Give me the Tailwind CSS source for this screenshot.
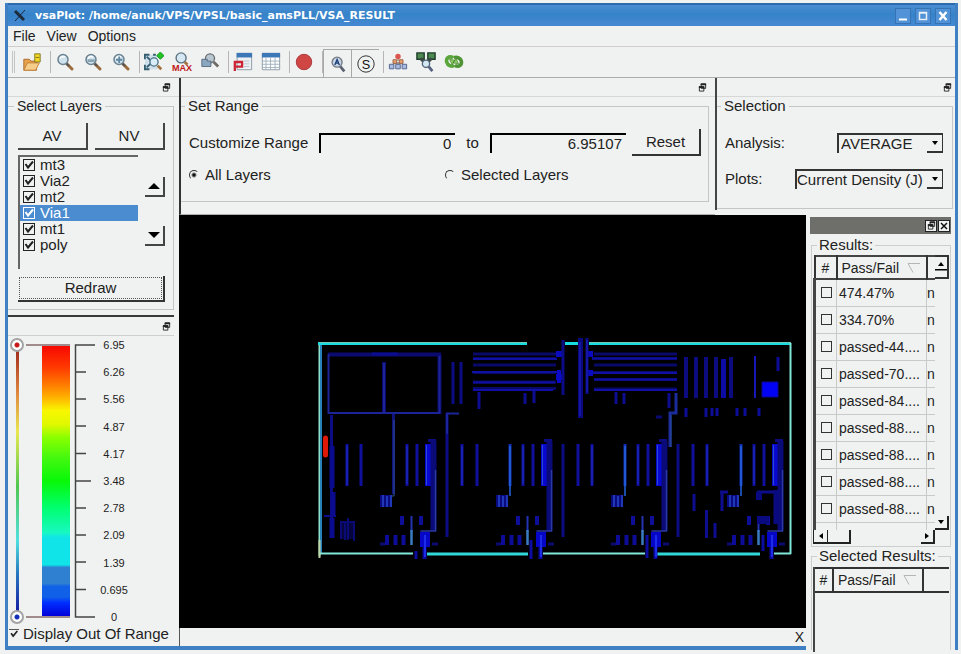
<!DOCTYPE html>
<html lang="en">
<head>
<meta charset="utf-8">
<meta name="viewport" content="width=device-width, initial-scale=1">
<title>vsaPlot</title>
<script src="https://cdn.jsdelivr.net/npm/@tailwindcss/browser@4"></script>
</head>
<body class="flex h-screen min-h-[654px] flex-col bg-[#f0f2f1] pt-[3px] pr-[3px] pb-1 pl-[5px] font-['Liberation_Sans',Arial,sans-serif] text-[15px] leading-[18px] text-[#222]">

<!-- shared icon shapes -->
<svg class="hidden" aria-hidden="true">
  <symbol id="float" viewBox="0 0 10 10"><path d="M3.5 1h5v5h-5zM1.5 4h5v5h-5z" fill="none" stroke="#222"/><path d="M3 1.5h6M1 4.5h6" stroke="#222" stroke-width="2"/></symbol>
  <symbol id="lens" viewBox="0 0 20 20"><path d="M12 12l5 5" stroke="#9a6b3c" stroke-width="3" stroke-linecap="round"/><path d="M11 11l3 3" stroke="#555" stroke-width="2"/><circle cx="8" cy="7.500" r="5" fill="#cfe3ee" stroke="#6c8290" stroke-width="1.500"/><path d="M5 6.500a3.500 3 0 0 1 5-1.500" stroke="#fff" stroke-width="1.500" fill="none"/></symbol>
  <symbol id="tick" viewBox="0 0 12 12"><path d="M2.500 5l2.500 3.500 5-6" fill="none" stroke="currentColor" stroke-width="2"/></symbol>
  <symbol id="sort" viewBox="0 0 14 12"><path d="M13 1.500H1l5 9" fill="none" stroke="#b5b5b5"/></symbol>
</svg>

<div class="flex min-h-0 flex-1 flex-col border-x-[3px] border-[#3f7fc4]">
  <header class="flex h-[23px] shrink-0 items-center border-t-2 border-[#2c6aae] bg-[linear-gradient(#4a8cd2,#3683c9_45%,#4589d2)] pr-1 pl-1">
    <svg class="h-4 w-4" viewBox="0 0 16 16"><path d="M3 3l9 9" stroke="#1c2a3a" stroke-width="3"/><path d="M13 2L3 13" stroke="#1c2a3a" stroke-width="1"/></svg>
    <h1 class="ml-[7px] flex-1 font-['DejaVu_Sans',sans-serif] text-[11px] font-bold whitespace-nowrap text-white">vsaPlot: /home/anuk/VPS/VPSL/basic_amsPLL/VSA_RESULT</h1>
    <div class="flex gap-1">
      <button aria-label="Minimize" class="h-4 w-4 border border-[#3673b5] bg-[#5292d6]"><svg viewBox="0 0 14 14"><path d="M3 10.500h8" stroke="#fff" stroke-width="2"/></svg></button>
      <button aria-label="Maximize" class="h-4 w-4 border border-[#3673b5] bg-[#5292d6]"><svg viewBox="0 0 14 14"><path d="M3.500 3.500h7v7h-7zM3 4h8" fill="none" stroke="#e8f0f8" stroke-width="1.500"/></svg></button>
      <button aria-label="Close" class="h-4 w-4 border border-[#3673b5] bg-[#5292d6]"><svg viewBox="0 0 14 14"><path d="M3.500 3l7 8M10.500 3l-7 8" stroke="#fff" stroke-width="2.500"/></svg></button>
    </div>
  </header>

  <nav class="flex h-[21px] shrink-0 items-center gap-[11px] border-b border-[#d2cccc] pl-[5px] text-[14px]">
    <button>File</button><button>View</button><button>Options</button>
  </nav>

  <div role="toolbar" class="flex h-[31px] shrink-0 items-stretch border-b border-[#a9adad] [&>button]:grid [&>button]:w-7 [&>button]:place-items-center [&>i]:ml-1 [&>i]:my-1 [&>i]:w-px [&>i]:bg-[#b9b5b5] [&_svg]:size-[20px]">
    <span class="my-1 mr-[3px] ml-1 w-[3px] border-x border-[#c4c4c4]"></span>
    <button aria-label="Open"><svg viewBox="0 0 22 22"><path d="M2 8h6l2 2h6v10H2z" fill="#e8a24c" stroke="#a8672a"/><path d="M2 20l4-8h13l-4 8z" fill="#f6cd8a" stroke="#c08038"/><path d="M14 2h6v9h-6z" fill="#f2d624" stroke="#7c7420"/><path d="M15 6h4" stroke="#7c7420"/></svg></button>
    <i></i>
    <button aria-label="Zoom"><svg viewBox="0 0 22 22"><use href="#lens"/></svg></button>
    <button aria-label="Zoom out"><svg viewBox="0 0 22 22"><use href="#lens"/><path d="M5 9.500h8" stroke="#8aa4b4" stroke-width="3"/></svg></button>
    <button aria-label="Zoom fit"><svg viewBox="0 0 22 22"><use href="#lens"/><path d="M5.500 8.500h7M9 5v7" stroke="#5f87a0" stroke-width="2"/></svg></button>
    <i></i>
    <button aria-label="Zoom area"><svg viewBox="0 0 22 22"><path d="M1 3h14v16H1z" fill="#cfe0ea"/><path d="M1 8V3h5M1 14v5h5M10 3h3M3 5l4 4M3 17l4-4" stroke="#355d70" stroke-width="2" fill="none"/><circle cx="11" cy="11" r="4.500" fill="#d8edf8" stroke="#4d7386" stroke-width="1.500"/><path d="M15 15l4 4" stroke="#a4713c" stroke-width="3"/><path d="M18 0l4 4-4 4-4-4z" fill="#21c422" stroke="#118a18"/></svg></button>
    <button aria-label="Zoom to maximum"><svg viewBox="0 0 22 22"><circle cx="10" cy="6.500" r="5.500" fill="#d5e8f4" stroke="#5c7280" stroke-width="1.500"/><path d="M14 11l3 3" stroke="#a4713c" stroke-width="3"/><text x="0" y="21" font-size="10" font-weight="700" font-family="Liberation Sans" fill="#c01818">MAX</text></svg></button>
    <button aria-label="Zoom previous"><svg viewBox="0 0 22 22"><circle cx="11" cy="7" r="5" fill="#b9c8d0" stroke="#6a6f74" stroke-width="1.500"/><path d="M15 11l5 5" stroke="#6d6a66" stroke-width="3"/><path d="M2 8h6v2h4v6H2z" fill="#8aa6c0" stroke="#55697c"/></svg></button>
    <i></i>
    <button aria-label="Plot report"><svg viewBox="0 0 22 22"><path d="M4.500 1.500h16v18h-16z" fill="#edf1f4" stroke="#8a97a2"/><path d="M4 1h17v5H4z" fill="#3c78b8"/><path d="M12 10h6M12 13h6M12 16h6" stroke="#b6c2cc"/><path d="M2 21V11h8v5H3" stroke="#cc2434" stroke-width="2.500" fill="none"/></svg></button>
    <button aria-label="Table report"><svg viewBox="0 0 22 22"><path d="M1.500 1.500h19v18h-19z" fill="#fff" stroke="#8a97a2"/><path d="M1 1h20v5H1z" fill="#3c78b8"/><path d="M1 10h20M1 13.500h20M1 17h20M5.500 6v13M10.500 6v13M15.500 6v13" stroke="#9fb0bd"/></svg></button>
    <i></i>
    <button aria-label="Stop"><svg viewBox="0 0 22 22"><circle cx="11" cy="11" r="8.500" fill="#cf4644" stroke="#a83434"/></svg></button>
    <i></i>
    <button aria-label="Auto zoom" class="mt-[2px] border-t border-l border-[#a8a8a8]"><svg viewBox="0 0 22 22"><path d="M13 13l5 6" stroke="#5d6270" stroke-width="3"/><circle cx="10" cy="9" r="5.500" fill="#c5d4e6" stroke="#777c84" stroke-width="1.500"/><path d="M7.500 12L10 6l2.500 6M8.500 10h3" stroke="#1e4078" stroke-width="1.500" fill="none"/></svg></button>
    <button aria-label="Snap" class="mt-[2px] border-t border-l border-[#a8a8a8]"><svg viewBox="0 0 22 22"><circle cx="11" cy="11" r="9" fill="none" stroke="#222"/><text x="11" y="16" text-anchor="middle" font-size="14" font-family="Liberation Sans" fill="#111">S</text></svg></button>
    <i></i>
    <button aria-label="Hierarchy"><svg viewBox="0 0 22 22"><path d="M11 6v4M4 17l3-5h8l3 5M11 12v5" stroke="#7a5a50" fill="none"/><circle cx="11" cy="5" r="3" fill="#dc5650"/><path d="M5.500 8.500h4v4h-4zM12.500 8.500h4v4h-4z" fill="#eaa070" stroke="#9a6040"/><path d="M1.500 13.500h5v5h-5zM8.500 13.500h5v5h-5zM15.500 13.500h5v5h-5z" fill="#a9bce0" stroke="#4d5f8c"/></svg></button>
    <button aria-label="Find nets"><svg viewBox="0 0 22 22"><path d="M1 1h8v7H1zM13 1h8v7h-8z" fill="#4d8a52" stroke="#1c3a28" stroke-width="1.500"/><path d="M5 7l6 6 6-6" stroke="#3b4a44" stroke-width="3.500" fill="none"/><circle cx="11" cy="13" r="4" fill="#d4e8f4" stroke="#567" stroke-width="1.500"/><path d="M14 16l4 5" stroke="#556080" stroke-width="3"/></svg></button>
    <button aria-label="Refresh"><svg viewBox="0 0 22 22"><path d="M10 6c-5-2-8 1-7 5s6 6 8 3" fill="none" stroke="#5aa63c" stroke-width="4"/><path d="M12 15c5 2 8-1 7-5s-6-5-8-3" fill="none" stroke="#4f9434" stroke-width="4"/><path d="M6 8l6 1-3 5zM16 13l-6-1 3-5z" fill="#8acc60" stroke="#3c7c28" stroke-width=".7"/></svg></button>
  </div>

  <main class="flex min-h-0 flex-1">
    <!-- left docks -->
    <aside class="flex w-[171px] shrink-0 flex-col border-b-4 border-[#3f7fc4]">
      <div class="flex h-[19px] items-center justify-end border-b border-[#d6d8d8] pr-2"><button aria-label="Float layers"><svg class="size-[9px]"><use href="#float"/></svg></button></div>
      <fieldset class="mr-[5px] border-t border-r border-b border-[#c4c6c6] pr-2 pb-[7px] pl-[10px]">
        <legend class="-ml-1 px-[3px] text-[14px]">Select Layers</legend>
        <div class="mt-2 flex gap-[7px]">
          <button class="h-[27px] flex-1 border-r-2 border-b-2 border-[#444]">AV</button>
          <button class="h-[27px] flex-1 border-r-2 border-b-2 border-[#444]">NV</button>
        </div>
        <div class="mt-[5px] flex gap-[7px]">
          <ul id="layers" class="h-[114px] flex-1 border-t-2 border-l-2 border-[#666] leading-4"></ul>
          <div class="flex w-5 flex-col gap-[29px] pt-[22px]">
            <button aria-label="Move up" class="grid h-5 place-items-center border-r-2 border-b-2 border-[#444]"><svg class="h-[6px] w-3" viewBox="0 0 12 6"><path d="M0 6l6-6 6 6z"/></svg></button>
            <button aria-label="Move down" class="grid h-5 place-items-center border-r-2 border-b-2 border-[#444]"><svg class="h-[6px] w-3" viewBox="0 0 12 6"><path d="M0 0l6 6 6-6z"/></svg></button>
          </div>
        </div>
        <button class="mt-[7px] block h-[26px] w-full border-r-2 border-b-2 border-[#333] p-px"><span class="block border border-dotted border-[#555] leading-5">Redraw</span></button>
      </fieldset>

      <section class="mt-[5px] mr-[5px] flex flex-1 flex-col border-t-2 border-[#3a3a3a]">
        <div class="flex h-[19px] items-center justify-end border-b border-[#cfcfcf] pr-[3px]"><button aria-label="Float scale"><svg class="size-[9px]"><use href="#float"/></svg></button></div>
        <div class="mt-[2px] flex h-[286px]">
          <div class="grid w-[18px] place-items-center [&>*]:col-start-1 [&>*]:row-start-1">
            <span class="h-[272px] w-[3px] bg-[linear-gradient(#9a2018,#e08a40_18%,#e8e850_32%,#50c850_52%,#50e0e0_72%,#2878c0_84%,#1010a0)]"></span>
            <input type="range" aria-label="Lower limit" min="0" max="6.95" step="0.01" value="0" class="pointer-events-none h-[286px] w-[14px] appearance-none bg-transparent [direction:rtl] [writing-mode:vertical-lr] [&::-webkit-slider-thumb]:pointer-events-auto [&::-webkit-slider-thumb]:size-[14px] [&::-webkit-slider-thumb]:appearance-none [&::-webkit-slider-thumb]:rounded-full [&::-webkit-slider-thumb]:border-2 [&::-webkit-slider-thumb]:border-[#a3a3a3] [&::-webkit-slider-thumb]:bg-[radial-gradient(#1030b8_0_2px,#fff_3px)]">
            <input type="range" aria-label="Upper limit" min="0" max="6.95" step="0.01" value="6.95" class="pointer-events-none h-[286px] w-[14px] appearance-none bg-transparent [direction:rtl] [writing-mode:vertical-lr] [&::-webkit-slider-thumb]:pointer-events-auto [&::-webkit-slider-thumb]:size-[14px] [&::-webkit-slider-thumb]:appearance-none [&::-webkit-slider-thumb]:rounded-full [&::-webkit-slider-thumb]:border-2 [&::-webkit-slider-thumb]:border-[#a3a3a3] [&::-webkit-slider-thumb]:bg-[radial-gradient(#c81818_0_2px,#fff_3px)]">
          </div>
          <div class="my-[6px] w-11 border-y-2 border-[#a08c8c] pl-4"><div class="h-full w-7 bg-[linear-gradient(#f80800,#ff3a00_8%,#ff7800_14%,#ffb000_19%,#f8f800_24%,#e0f800_29%,#88ff00_34%,#40f810_42%,#08f808_50%,#00ff70_60%,#18f8c0_69%,#10e4e8_71%_81%,#2f80d0_82%_88%,#1060e8_89%_93%,#0030ff_95%,#0000d8)]"></div></div>
          <svg class="mt-[6px] ml-1 h-[274px] w-[22px]" viewBox="0 0 22 274"><path d="M21 1H1.500v272H21M1 28h11M1 55h11M1 82h11M1 109.500h11M1 137h16M1 164h11M1 191h11M1 218h11M1 245.500h11" fill="none" stroke="#444" stroke-width="1.500"/></svg>
          <ol id="scale" class="my-px flex w-9 flex-col justify-between text-center text-[11px] leading-3"></ol>
        </div>
        <label class="flex items-center gap-1 pt-[1px] pl-px whitespace-nowrap"><span class="grid [&>*]:col-start-1 [&>*]:row-start-1"><input type="checkbox" checked class="peer size-[10px] appearance-none border-t border-[#555]"><svg class="pointer-events-none hidden size-[10px] peer-checked:block"><use href="#tick"/></svg></span>Display Out Of Range</label>
      </section>
    </aside>

    <div class="flex min-w-0 flex-1 flex-col">
      <div class="flex h-[137px] shrink-0">
        <section class="min-w-0 flex-1 border-b border-l-2 border-b-[#b0b0b0] border-l-[#333]">
          <div class="flex h-[19px] items-center justify-end border-b border-[#d6d8d8] pr-2"><button aria-label="Float range"><svg class="size-[9px]"><use href="#float"/></svg></button></div>
          <fieldset class="mr-[6px] h-[105px] min-w-0 border border-l-0 border-[#c4c6c6] pr-[7px] pl-[8px]">
            <legend class="-ml-1 px-[3px]">Set Range</legend>
            <div class="mt-[14px] flex h-[27px] items-center gap-[11px]">
              <label for="lo" class="shrink-0">Customize Range</label>
              <input id="lo" value="0" class="h-5 min-w-0 flex-1 border-t-2 border-l-2 border-black pr-1 text-right outline-none">
              <label for="hi">to</label>
              <input id="hi" value="6.95107" class="h-5 min-w-0 flex-1 border-t-2 border-l-2 border-black pr-1 text-right outline-none">
              <button class="-ml-[5px] h-[27px] w-[69px] shrink-0 border-r-2 border-b-2 border-[#333]">Reset</button>
            </div>
            <div class="mt-[10px] grid grid-cols-2 items-center">
              <label class="flex items-center gap-[6px]"><input type="radio" name="scope" checked class="size-[10px] appearance-none rounded-full border border-transparent border-t-[#333] border-l-[#333] checked:bg-[radial-gradient(#111_0_1px,transparent_3px)]">All Layers</label>
              <label class="flex items-center gap-[6px]"><input type="radio" name="scope" class="size-[10px] appearance-none rounded-full border border-transparent border-t-[#333] border-l-[#333] checked:bg-[radial-gradient(#111_0_1px,transparent_3px)]">Selected Layers</label>
            </div>
          </fieldset>
        </section>
        <section class="mb-[5px] w-[240px] shrink-0 border-l-2 border-[#444]">
          <div class="flex h-[19px] items-center justify-end border-b border-[#d6d8d8] pr-[3px]"><button aria-label="Float selection"><svg class="size-[9px]"><use href="#float"/></svg></button></div>
          <fieldset class="mr-[2px] h-[112px] border border-l-0 border-[#c4c6c6] pr-[9px] pl-2">
            <legend class="-ml-1 px-[3px]">Selection</legend>
            <div class="mt-[18px] flex h-5 items-center justify-between">
              <label for="analysis">Analysis:</label>
              <span class="grid w-[106px] border-t-2 border-r border-l-2 border-[#333] [&>*]:row-start-1 [&>*]:col-start-1">
                <select id="analysis" class="h-[18px] appearance-none pl-[2px]"><option>AVERAGE</option></select>
                <span class="pointer-events-none grid w-[15px] place-items-center justify-self-end border-b-2 border-[#333]"><svg class="h-1 w-[6px]" viewBox="0 0 6 4"><path d="M0 0h6L3 4z"/></svg></span>
              </span>
            </div>
            <div class="mt-4 flex h-5 items-center justify-between">
              <label for="plots">Plots:</label>
              <span class="grid w-[148px] border-t-2 border-r border-l-2 border-[#333] [&>*]:row-start-1 [&>*]:col-start-1">
                <select id="plots" class="h-[18px] appearance-none"><option>Current Density (J)</option></select>
                <span class="pointer-events-none grid w-[15px] place-items-center justify-self-end border-b-2 border-[#333]"><svg class="h-1 w-[6px]" viewBox="0 0 6 4"><path d="M0 0h6L3 4z"/></svg></span>
              </span>
            </div>
          </fieldset>
        </section>
      </div>

      <div class="flex min-h-0 flex-1">
        <div class="flex min-w-0 flex-1 flex-col border-b-4 border-[#3f7fc4]">
          <div class="min-h-0 flex-1 bg-black">
            <svg class="h-full w-full" viewBox="179 215 627 413" role="img" aria-label="Current density layout plot" fill="none">
              <defs>
                <g id="cell">
                  <path d="M407 444v42M417 444v42" stroke="#10109c" stroke-width="3"/>
                  <path d="M407 446v38" stroke="#2030c8"/>
                  <path d="M425 444h8v42h-8z" fill="#0808d0"/><path d="M426.500 445v40" stroke="#2848d8"/>
                  <path d="M428 439h8v3h-8z" fill="#0c0c80"/>
                  <path d="M433.500 441v90" stroke="#0a0a78" stroke-width="6"/><path d="M435.500 470v61h-15" stroke="#2a3aa0" stroke-width="1.500"/>
                  <path d="M380 495h12v12h-12z" fill="#0a0a80"/><path d="M383 495v12M387 496v11M391 495v12" stroke="#2848c8" stroke-width="1.500"/>
                  <path d="M402 516v9M421 516v9" stroke="#0e0e98" stroke-width="4"/>
                  <path d="M411.500 516v16" stroke="#2433b0" stroke-width="2"/><path d="M411.500 530v15" stroke="#3a7cc0" stroke-width="2.500"/>
                  <path d="M387 535v10M395.500 535v10M403.500 535v10" stroke="#0c0c98" stroke-width="4"/>
                  <path d="M380 544h5M432 544h6" stroke="#0a0a70" stroke-width="3"/>
                  <path d="M420 532h10v15h-10z" fill="#0606c8"/><path d="M424.500 546v13" stroke="#0a0aa0" stroke-width="4"/><path d="M425 535v22" stroke="#1c2ce8" stroke-width="2"/>
                </g>
              </defs>
              <path d="M319.500 556V343" stroke="#8ce0d0" stroke-width="2"/><path d="M321 345v208" stroke="#2880b8" stroke-width="2"/>
              <path d="M318 343.500h209M565 343.500h13M589 343.500h202" stroke="#18dce0" stroke-width="3"/>
              <path d="M319 342.500h208M590 342.500h201" stroke="#70c8b8"/>
              <path d="M790.500 343v211M320 553.500h93M543 553.500h102M774 553.500h17" stroke="#80e8d8" stroke-width="2"/>
              <path d="M427 554h101M657 554h103" stroke="#30d8d8" stroke-width="3"/>
              <path d="M319.500 540v18" stroke="#c0d8a8" stroke-width="2"/>
              <path d="M325.500 438v17" stroke="#e01808" stroke-width="5" stroke-linecap="round"/>
              <path d="M328 354.500h113M439.500 354v60M384 362v51" stroke="#0a0a70" stroke-width="4"/>
              <path d="M328.500 354v59h112M439.500 356v56M384 363v50" stroke="#1c2498" stroke-width="2"/>
              <path d="M372 354h26" stroke="#0c0c90" stroke-width="3"/>
              <path d="M453 362v42M461 362v42" stroke="#0c0c84" stroke-width="3"/>
              <path d="M473 354h83M473 358.500h83M473 365h83M473 372.500h83M473 382h83M473 388.500h83" stroke="#09096a" stroke-width="3"/>
              <path d="M473 359h84M472 372h88M473 382.500h82M473 390h80" stroke="#1010a4" stroke-width="2"/>
              <path d="M594 354h83M592 358.500h85M594 365h83M592 372.500h85M594 379.500h83M594 389h83" stroke="#09096a" stroke-width="3"/>
              <path d="M592 358.500h85M592 373h85M594 379.500h83M594 390h83" stroke="#1010a4" stroke-width="2"/>
              <path d="M556 354h7M556 377h6M587 354h6M587 373h6" stroke="#0a0ac0" stroke-width="6"/>
              <path d="M559 370v13" stroke="#0a0ac8" stroke-width="4"/>
              <path d="M563 340v55M587 338v56" stroke="#0c0c88" stroke-width="3"/>
              <path d="M580.500 338v80" stroke="#0a0a80" stroke-width="5"/><path d="M580 342v74M587 340v52" stroke="#2020c0"/>
              <path d="M479 392v17M525 393v11M534 391v12M616 392v12M624 393v11M669 393v15" stroke="#0d0d90" stroke-width="3"/>
              <path d="M676 393v20h-6v34" stroke="#1c2c9c" stroke-width="3"/><path d="M671 415v32" stroke="#2a5098"/>
              <path d="M656 417h6" stroke="#0a0a70" stroke-width="3"/>
              <path d="M686 357v41M696 357v41M706 357v41M716 357v41M731 357v41" stroke="#0c0c80" stroke-width="4"/>
              <path d="M723.500 359v39" stroke="#0c0ca4" stroke-width="5"/><path d="M755 356v42" stroke="#1818b8" stroke-width="2"/>
              <path d="M778 357v14" stroke="#0c0c98" stroke-width="3"/>
              <path d="M762 382h16v15h-16z" fill="#0202f4" stroke="#0a0a90"/>
              <path d="M686 408v9M706 408v9M712 408v8M717 408v8M737 408v8M745 408v8M759 408v8" stroke="#0d0d98" stroke-width="3"/>
              <path d="M331.500 415v122M447 413v124M563 444v93M678 444v93" stroke="#0c0c84" stroke-width="3"/>
              <path d="M332 446v42M333 492v25M332 518v20" stroke="#0b0b90" stroke-width="5"/><path d="M324 516h12" stroke="#0b0b90" stroke-width="2"/>
              <path d="M446 413.500h13M447 414v20" stroke="#1c249c" stroke-width="2"/>
              <path d="M347 444v42M361 444v42M462 444v42M477 444v42M578 444v42M592 444v42M693 444v42M707 444v42" stroke="#10109c" stroke-width="3"/>
              <path d="M347 446v39M462 446v39M592 446v39M707 446v39" stroke="#2030cc"/>
              <path d="M393.500 414v80" stroke="#12127c" stroke-width="3"/><path d="M394 420v76h-3" stroke="#2c5090"/>
              <path d="M510 444v42M625 444v42M741 444v42" stroke="#1030b0" stroke-width="3"/>
              <path d="M510 446v50M625 446v50M741 446v50" stroke="#2464e0" stroke-width="1.500"/>
              <use href="#cell"/><use href="#cell" x="116"/><use href="#cell" x="231"/><use href="#cell" x="347"/>
              <path d="M416 551v8M531 540v19M647 535v23M763 535v16" stroke="#0c0ca0" stroke-width="3"/>
              <path d="M341 522h12v17h-12z" fill="#06063c"/><path d="M341 522h13v19M341 521v18M348 518v22M345 522v18" stroke="#0a0a74" stroke-width="2"/>
              <path d="M694 494v17M706.500 510v28M715 523v15M722 491v20" stroke="#0d0d90" stroke-width="3"/>
              <path d="M720 492h8M757 492h18" stroke="#0c0c8c" stroke-width="3"/><path d="M756 492h6v8h-6zM757 516h12v8h-12z" fill="#0a0a80"/><path d="M776 490v34" stroke="#0a0a80" stroke-width="5"/>
            </svg>
          </div>
          <div class="flex h-[18px] shrink-0 items-center justify-end border-l border-[#555] pr-[2px]"><button aria-label="Close plot messages" class="text-[14px]">X</button></div>
        </div>

        <!-- results dock -->
        <aside class="ml-1 flex w-[145px] shrink-0 flex-col pt-[2px] pr-1">
          <div class="flex h-[17px] shrink-0 items-center justify-end gap-px bg-[#6e6e6a] pr-px">
            <button aria-label="Float results" class="grid size-3 place-items-center border border-[#222] bg-[#f0f2f1]"><svg class="size-[9px]"><use href="#float"/></svg></button>
            <button aria-label="Close results" class="grid size-3 place-items-center border border-[#222] bg-[#f0f2f1]"><svg class="size-2" viewBox="0 0 8 8"><path d="M1 1l6 6M7 1L1 7" stroke="#111" stroke-width="1.500"/></svg></button>
          </div>
          <fieldset class="mt-[2px] ml-px h-[311px] min-w-0 shrink-0 border border-[#cccece] px-px">
            <legend class="ml-1 px-[2px]">Results:</legend>
            <div class="mt-px grid grid-cols-[minmax(0,1fr)_14px] grid-rows-[275px_14px]">
              <div class="overflow-hidden">
                <table class="w-full table-fixed border-collapse text-[14px]">
                  <colgroup><col class="w-[22px]"><col class="w-[90px]"><col></colgroup>
                  <thead><tr class="h-[23px] border-t-2 border-b-2 border-[#444]"><th class="border-l-2 border-[#333] font-normal">#</th><th class="border-x-2 border-[#333] pl-1 text-left font-normal"><span class="flex items-center justify-between pr-[5px]">Pass/Fail<svg class="h-3 w-[14px]"><use href="#sort"/></svg></span></th><th></th></tr></thead>
                  <tbody id="results"></tbody>
                </table>
              </div>
              <div class="flex flex-col justify-between">
                <button aria-label="Scroll up" class="grid h-6 place-items-center border-t-2 border-r-2 border-b-2 border-[#333]"><svg class="h-3 w-3" viewBox="0 0 12 12"><path d="M3 5h6L6 1zM0 8h12v1.500H0z"/></svg></button>
                <button aria-label="Scroll down" class="grid h-[14px] place-items-center border-r-2 border-b-2 border-[#222]"><svg class="h-1 w-[6px]" viewBox="0 0 6 4"><path d="M0 0h6L3 4z"/></svg></button>
              </div>
              <div class="flex">
                <button aria-label="Scroll left" class="grid w-[15px] place-items-center border-r border-b-2 border-l border-[#222]"><svg class="h-[6px] w-1" viewBox="0 0 4 6"><path d="M4 0v6L0 3z"/></svg></button>
                <span class="w-[23px] border-r-2 border-b-2 border-[#222]"></span>
                <button aria-label="Scroll right" class="ml-auto grid w-[14px] place-items-center border-r-2 border-b-2 border-[#222]"><svg class="h-[6px] w-1" viewBox="0 0 4 6"><path d="M0 0v6l4-3z"/></svg></button>
              </div>
            </div>
          </fieldset>
          <fieldset class="ml-px min-h-0 min-w-0 flex-1 border border-b-0 border-[#cccece] px-px">
            <legend class="ml-1 px-[2px]">Selected Results:</legend>
            <div class="mt-[2px] h-full border-l-2 border-[#444]">
              <table class="w-full table-fixed border-collapse text-[14px]">
                <colgroup><col class="w-[18px]"><col class="w-[90px]"><col></colgroup>
                <thead><tr class="h-6 border-t-2 border-b-2 border-[#333]"><th class="font-normal">#</th><th class="border-x-2 border-[#333] pl-1 text-left font-normal"><span class="flex items-center justify-between pr-[5px]">Pass/Fail<svg class="h-3 w-[14px]"><use href="#sort"/></svg></span></th><th></th></tr></thead>
              </table>
            </div>
          </fieldset>
        </aside>
      </div>
    </div>
  </main>
</div>

<script>
  document.getElementById('layers').innerHTML = ['mt3', 'Via2', 'mt2', 'Via1', 'mt1', 'poly'].map(name => `
    <li class="${name === 'Via1' ? 'bg-[#4a8ccf] text-white' : ''}"><label class="flex h-4 items-center gap-[5px] pl-[3px]">
      <span class="grid [&>*]:col-start-1 [&>*]:row-start-1"><input type="checkbox" checked class="peer size-3 appearance-none border border-current"><svg class="pointer-events-none hidden size-3 peer-checked:block"><use href="#tick"/></svg></span>${name}</label></li>`).join('');

  document.getElementById('scale').innerHTML = ['6.95', '6.26', '5.56', '4.87', '4.17', '3.48', '2.78', '2.09', '1.39', '0.695', '0']
    .map(v => `<li>${v}</li>`).join('');

  document.getElementById('results').innerHTML = ['474.47%', '334.70%', 'passed-44....', 'passed-70....', 'passed-84....', 'passed-88....', 'passed-88....', 'passed-88....', 'passed-88....', 'passed-88....'].map((v, i) => `
    <tr class="h-[27px] border-b border-[#c8caca]"><td class="border-r border-l-[3px] border-r-[#c8caca] border-l-[#444] pl-[5px]"><input type="checkbox" aria-label="Result ${i + 1}" class="block size-[11px] appearance-none border border-[#333]"></td>
    <td class="border-r border-[#c8caca] pl-[2px] whitespace-nowrap">${v}</td><td class="overflow-hidden">n</td></tr>`).join('');
</script>
</body>
</html>
